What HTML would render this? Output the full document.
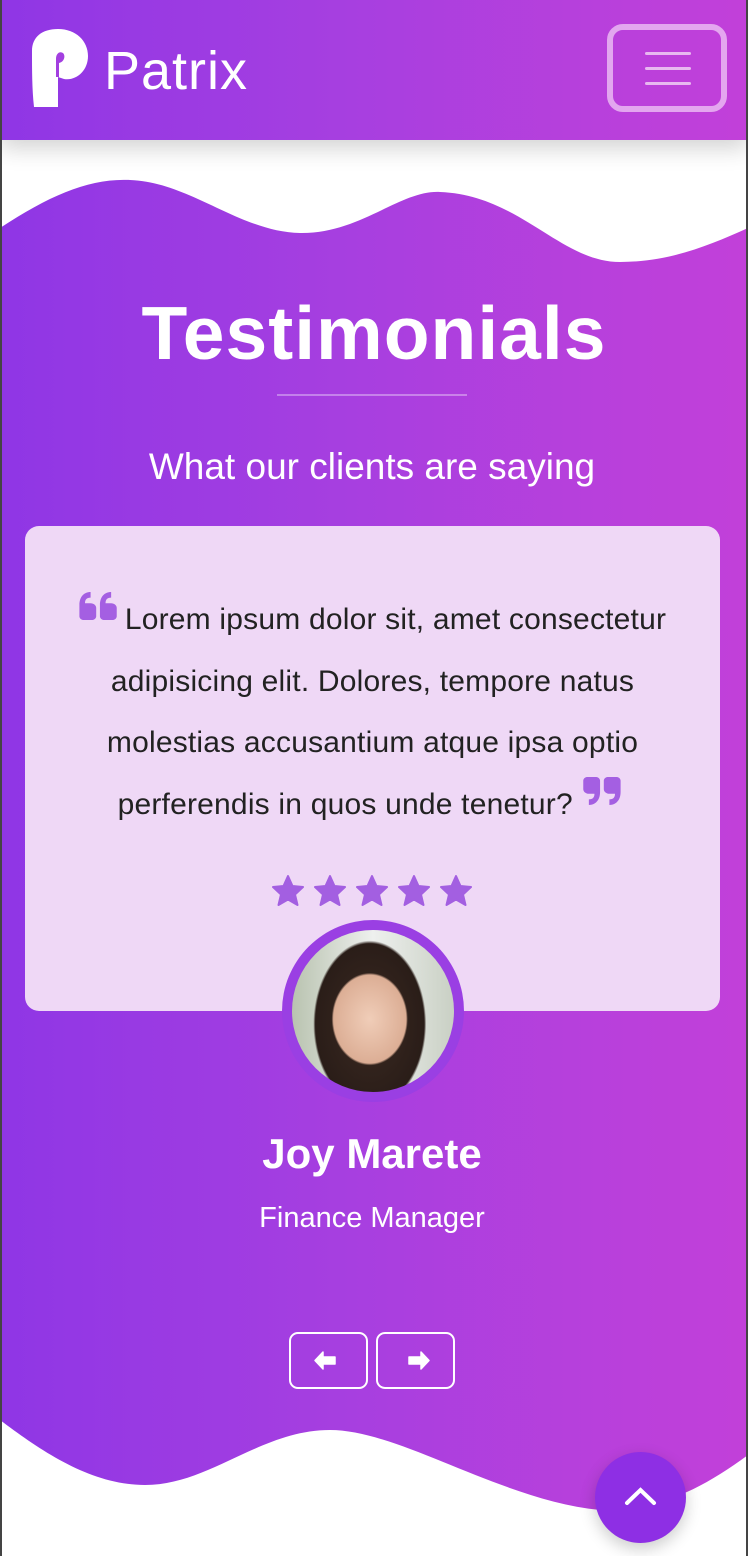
<!DOCTYPE html>
<html><head><style>
*{margin:0;padding:0;box-sizing:border-box}
html{background:#fff}
body{width:748px;height:1556px;position:relative;overflow:hidden;background:#fff;font-family:"Liberation Sans",sans-serif}
.bl{position:absolute;top:0;width:2px;height:1556px;background:#444;z-index:9}
header{position:absolute;left:0;top:0;width:748px;height:140px;box-shadow:0 8px 22px rgba(0,0,0,.18);z-index:3;background:linear-gradient(90deg,#8f36e5,#a63fe0 45%,#c240d9)}
.logo{position:absolute;left:104px;top:40px;color:#fff;font-size:54px;letter-spacing:1px}
.burger{position:absolute;left:607px;top:24px;width:120px;height:88px;border:6px solid rgba(240,200,245,.75);border-radius:16px}
.burger i{position:absolute;left:32px;width:46px;height:3px;background:#e8b8f0;border-radius:2px}
.sec{position:absolute;left:0;top:0;width:748px;height:1556px}
h1{position:absolute;top:290px;width:748px;text-align:center;color:#fff;font-size:75px;font-weight:bold;letter-spacing:1px}
.line{position:absolute;left:277px;top:394px;width:190px;height:2px;background:rgba(255,255,255,.35)}
.sub{position:absolute;top:446px;width:744px;text-align:center;color:#fff;font-size:37px}
.card{position:absolute;left:25px;top:526px;width:695px;height:485px;background:#efd8f6;border-radius:14px}
.quote{position:absolute;left:15px;top:589px;width:715px;text-align:center;color:#222;font-size:30px;line-height:61.5px;letter-spacing:.2px}
.qs{display:inline-block;margin-right:6px}
.stars{position:absolute;left:270px;top:872px}
.av{position:absolute;left:282px;top:920px;width:182px;height:182px;border-radius:50%;background:#9a3fe3;padding:10px}
.av div{width:100%;height:100%;border-radius:50%;background:radial-gradient(ellipse 28% 34% at 48% 55%,#f0cdb8 0,#dcae95 80%,transparent 84%),radial-gradient(ellipse 42% 62% at 48% 58%,#3b2a22 0,#2a1d18 80%,transparent 83%),linear-gradient(90deg,#b9c3b0,#eef0ee 50%,#c9d0c4);}
.name{position:absolute;top:1130px;width:744px;text-align:center;color:#fff;font-size:42px;font-weight:bold}
.role{position:absolute;top:1202px;width:744px;text-align:center;color:#fff;font-size:29px}
.btn{position:absolute;top:1332px;width:79px;height:57px;border:2px solid #fff;border-radius:9px}
.top{position:absolute;left:595px;top:1452px;width:91px;height:91px;border-radius:50%;background:#8e2fe4;box-shadow:0 6px 16px rgba(0,0,0,.2)}
</style></head><body>
<div class="bl" style="left:0"></div><div class="bl" style="left:746px"></div>
<svg class="sec" width="748" height="1556" viewBox="0 0 748 1556">
<defs><linearGradient id="g" x1="0" x2="1"><stop offset="0" stop-color="#8f36e5"/><stop offset=".45" stop-color="#a63fe0"/><stop offset="1" stop-color="#c240d9"/></linearGradient></defs>
<path fill="url(#g)" d="M0 228 C50 195 90 178 130 180 C190 182 240 232 300 233 C360 234 400 190 440 192 C520 195 560 262 620 262 C670 262 710 245 748 228 L748 1455 C700 1490 660 1510 600 1510 C500 1500 400 1430 330 1430 C260 1430 210 1485 145 1485 C90 1485 40 1450 0 1420 Z"/>
</svg>
<header>
<svg style="position:absolute;left:30px;top:29px" width="60" height="80" viewBox="0 0 60 80"><path fill="#fff" d="M2 22 C2 8 12 0 28 0 C46 0 58 12 58 27 C58 42 46 52 34 50 L28 48 L28 78 L4 78 C2 60 2 40 2 22 Z"/><path fill="#a33fe0" d="M26 30 C26 24 30 22 33 24 C36 27 34 33 29 34 L29 48 L26 48 Z"/></svg>
<div class="logo">Patrix</div>
<div class="burger"><i style="top:22px"></i><i style="top:37px"></i><i style="top:52px"></i></div>
</header>
<h1>Testimonials</h1>
<div class="line"></div>
<div class="sub">What our clients are saying</div>
<div class="card"></div>
<div class="quote"><svg class="qs" width="40" height="28" viewBox="0 0 42 30" style="vertical-align:9px"><path fill="#a45fe2" d="M0 14 C0 5 5 0 12 0 L12 6 C8 6 6 8 6 12 L12 12 C15 12 18 14 18 17 L18 26 C18 28 16 30 14 30 L4 30 C2 30 0 28 0 26 Z M22 14 C22 5 27 0 34 0 L34 6 C30 6 28 8 28 12 L34 12 C37 12 40 14 40 17 L40 26 C40 28 38 30 36 30 L26 30 C24 30 22 28 22 26 Z"/></svg>Lorem ipsum dolor sit, amet consectetur<br>adipisicing elit. Dolores, tempore natus<br>molestias accusantium atque ipsa optio<br>perferendis in quos unde tenetur? <svg class="qs" width="40" height="28" viewBox="0 0 42 30" style="vertical-align:9px;transform:rotate(180deg)"><path fill="#a45fe2" d="M0 14 C0 5 5 0 12 0 L12 6 C8 6 6 8 6 12 L12 12 C15 12 18 14 18 17 L18 26 C18 28 16 30 14 30 L4 30 C2 30 0 28 0 26 Z M22 14 C22 5 27 0 34 0 L34 6 C30 6 28 8 28 12 L34 12 C37 12 40 14 40 17 L40 26 C40 28 38 30 36 30 L26 30 C24 30 22 28 22 26 Z"/></svg></div>
<svg class="stars" width="210" height="38" viewBox="0 0 210 38">
<defs><path id="s" d="M16 1 L20.5 11 L31 12 L23 19.5 L25.5 30 L16 24.5 L6.5 30 L9 19.5 L1 12 L11.5 11 Z" fill="#a35fe1" stroke="#a35fe1" stroke-width="2" stroke-linejoin="round"/></defs>
<use href="#s" x="2" y="3"/><use href="#s" x="44" y="3"/><use href="#s" x="86" y="3"/><use href="#s" x="128" y="3"/><use href="#s" x="170" y="3"/>
</svg>
<div class="av"><div></div></div>
<div class="name">Joy Marete</div>
<div class="role">Finance Manager</div>
<div class="btn" style="left:289px"><svg width="75" height="53"><path d="M24 26.5 L32 18 L32 23 L44 23 L44 30 L32 30 L32 35 Z" fill="#fff" stroke="#fff" stroke-width="1.5" stroke-linejoin="round"/></svg></div>
<div class="btn" style="left:376px"><svg width="75" height="53"><path d="M51 26.5 L43 18 L43 23 L31 23 L31 30 L43 30 L43 35 Z" fill="#fff" stroke="#fff" stroke-width="1.5" stroke-linejoin="round"/></svg></div>
<div class="top"><svg width="91" height="91"><path d="M32 51 L45.5 38 L59 51" stroke="#fff" stroke-width="4" fill="none" stroke-linecap="round"/></svg></div>
</body></html>
